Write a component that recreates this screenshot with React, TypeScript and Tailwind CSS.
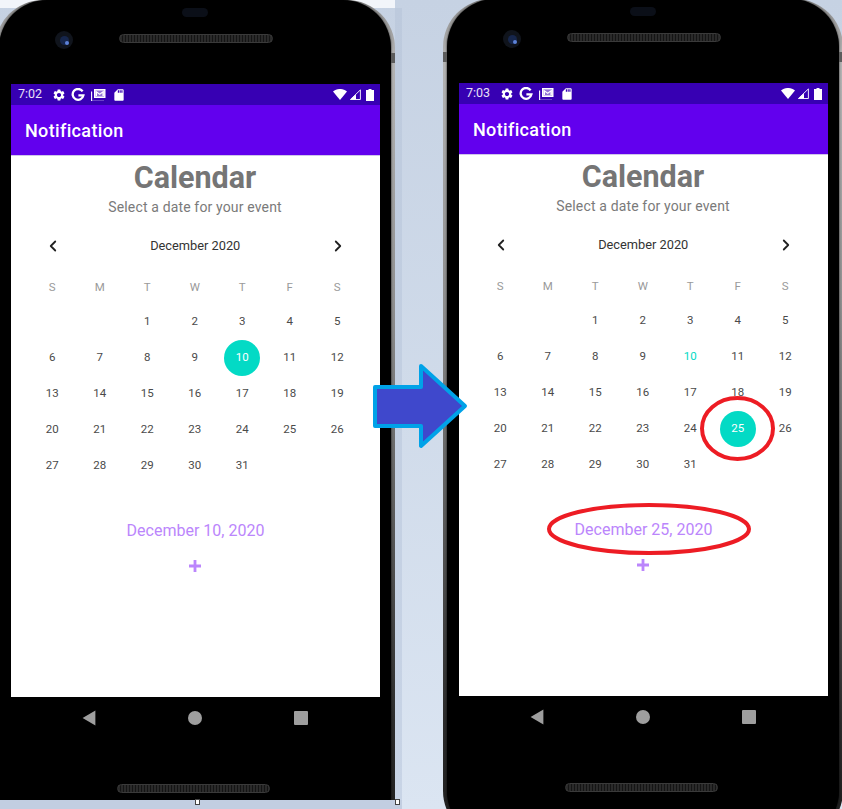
import { ChevronLeft, ChevronRight } from "lucide-react";
import { MdSettings, MdSdCard } from "react-icons/md";

const weekDays = ["S", "M", "T", "W", "T", "F", "S"];

function StatusIcons() {
  return (
    <div className="flex items-center gap-[6px] ml-[11px]">
      <MdSettings className="text-white w-[14px] h-[14px] -mx-px" />
      <svg viewBox="0 0 14 14" className="w-[14px] h-[14px]">
        <path d="M11.6 3.4A5.4 5.4 0 1 0 12.4 7.4H7.4" fill="none" stroke="#fff" strokeWidth="2.3" />
      </svg>
      <svg viewBox="0 0 15 13" className="w-[15px] h-[13px]">
        <path d="M3 1h11.5v9H3z" fill="#fff" />
        <path d="M4.4 2.4h8.7v6H4.4z" fill="#3700b3" opacity=".55" />
        <path d="M4.5 8V2.5l4.2 3 4.2-3V8h-1.5V5L8.7 7 6 5v3z" fill="#fff" />
        <path d="M.6 3.5v9.9h12.4" fill="none" stroke="#fff" strokeWidth="1.1" />
      </svg>
      <MdSdCard className="text-white w-[14px] h-[14px]" />
    </div>
  );
}

function SystemIcons() {
  return (
    <div className="flex items-center gap-[2px] mr-[6px]">
      <svg viewBox="0 0 14 11" className="w-[14px] h-[11px]">
        <path d="M0 2.6C4-.9 10-.9 14 2.6L7 11z" fill="#fff" />
      </svg>
      <svg viewBox="0 0 12 11" className="w-[12px] h-[11px]">
        <path d="M11.4.9v9.6H1.4z" fill="none" stroke="#fff" strokeWidth=".9" />
        <path d="M7 5.5v5H1.4z" fill="#fff" />
      </svg>
      <svg viewBox="0 0 8 12" className="w-[8px] h-[12px] ml-[3px]">
        <path d="M2.5 0h3v1H8v11H0V1h2.5z" fill="#fff" />
      </svg>
    </div>
  );
}

function Speaker({ width }: { width: string }) {
  return (
    <div
      className={`${width} h-[9px] rounded-full border border-[#3a3a3a] bg-[repeating-linear-gradient(90deg,#2a2a2a_0px,#2a2a2a_2px,#141414_2px,#141414_3px)]`}
    />
  );
}

function Phone({
  time,
  selected,
  date,
  className,
}: {
  time: string;
  selected: number;
  date: string;
  className: string;
}) {
  const cells: (number | null)[] = [null, null, ...Array.from({ length: 31 }, (_, i) => i + 1)];
  return (
    <div className={`relative w-[400px] shrink-0 overflow-hidden bg-[linear-gradient(180deg,#8a8a8a_0px,#b4b4b4_60px,#8f8f8f_300px,#6a6a6a_450px,#2c2c2c_720px,#1c1c1c_840px)] px-[4px] ${className}`}>
      <div className="absolute left-0 top-[53px] w-[4px] h-[10px] bg-[#5c5c5c]" />
      <div className="absolute right-0 top-[53px] w-[4px] h-[10px] bg-[#5c5c5c]" />
      <div className="h-full bg-black rounded-[inherit] shadow-[0_0_2px_#000]">
        <div className="relative h-[84px] flex flex-col items-center">
          <div className="w-[26px] h-[9px] rounded-full bg-[#0b0f18] mt-[8px]" />
          <div className="mt-[17px] ml-[1px]">
            <Speaker width="w-[154px]" />
          </div>
          <div className="absolute left-[56px] top-[31px] w-[18px] h-[18px] rounded-full bg-[#10141c] flex items-center justify-center">
            <div className="w-[9px] h-[9px] rounded-full bg-[#16264c] flex items-end justify-end">
              <div className="w-[4px] h-[4px] rounded-full bg-[#5d82d8]" />
            </div>
          </div>
        </div>

        <div className="ml-[12px] w-[369px] h-[613px] bg-white flex flex-col font-['Roboto',sans-serif]">
          <div className="h-[21px] bg-[#3700b3] flex items-center justify-between pl-[7px] text-white text-[12.5px]">
            <div className="flex items-center">
              <span className="text-[#e8e0f6]">{time}</span>
              <StatusIcons />
            </div>
            <SystemIcons />
          </div>
          <div className="h-[51px] bg-[#6200ee] border-b border-[#cfc4ea] flex items-center pl-[14px] text-white text-[18px] tracking-[0.35px] font-medium">
            Notification
          </div>

          <div className="text-center text-[30.5px] leading-[36px] font-bold text-[#757575] mt-[4px] -ml-px">Calendar</div>
          <div className="text-center text-[14px] tracking-[0.15px] leading-[20px] text-[#7a7a7a] mt-[1px] -ml-px">Select a date for your event</div>

          <div className="ml-[18px] w-[332.5px] grid grid-cols-7 mt-[13px] h-[32px] items-center text-[#212121]">
            <ChevronLeft className="justify-self-center w-[18px] h-[18px]" strokeWidth={2.4} />
            <div className="col-span-5 text-center text-[12.8px] text-[#333]">December 2020</div>
            <ChevronRight className="justify-self-center w-[18px] h-[18px]" strokeWidth={2.4} />
          </div>

          <div className="ml-[17.5px] w-[332.5px] grid grid-cols-7 mt-[10px]">
            {weekDays.map((d, i) => (
              <div key={i} className="h-[32px] flex items-center justify-center text-[11.5px] text-[#9a9a9a]">
                {d}
              </div>
            ))}
            {cells.map((n, i) => (
              <div key={i} className="h-[36px] flex items-center justify-center text-[11.5px] text-[#4a4a4a]">
                {n === selected ? (
                  <div className="w-[36px] h-[36px] rounded-full bg-[#03dac5] text-white flex items-center justify-center">{n}</div>
                ) : n === 10 ? (
                  <span className="text-[#03dac5]">{n}</span>
                ) : (
                  n
                )}
              </div>
            ))}
          </div>

          <div className="text-center text-[16px] leading-[24px] text-[#bb86fc] mt-[35px]">{date}</div>
          <svg viewBox="0 0 12 12" className="w-[12px] h-[12px] self-center mt-[17px] -ml-[2px]">
            <path d="M4.6 0h2.8v4.6H12v2.8H7.4V12H4.6V7.4H0V4.6h4.6z" fill="#bb86fc" />
          </svg>
        </div>

        <div className="ml-[11px] w-[369px] flex justify-center items-center mt-[14px] h-[14px]">
          <div className="w-[106px] flex justify-center">
            <svg viewBox="0 0 14 16" className="w-[14px] h-[16px]">
              <path d="M13.4 0.6v14.8L0.6 8z" fill="#9e9e9e" />
            </svg>
          </div>
          <div className="w-[106px] flex justify-center">
            <div className="w-[14px] h-[14px] rounded-full bg-[#9e9e9e]" />
          </div>
          <div className="w-[106px] flex justify-center">
            <div className="w-[14px] h-[14px] bg-[#9e9e9e] rounded-[1px]" />
          </div>
        </div>

        <div className="flex justify-center mt-[59px] -ml-[4px]">
          <Speaker width="w-[153px]" />
        </div>
      </div>
    </div>
  );
}

export default function App() {
  return (
    <div className="relative w-[842px] h-[809px] overflow-hidden flex items-start bg-[linear-gradient(180deg,#c6d2e3_0%,#d0dbea_50%,#dbe5f2_100%)]">
      <div className="absolute left-0 top-0 w-[395px] h-[8px] bg-[#f2f5fa]" />
      <div className="absolute left-[395px] top-[8px] w-[7px] h-[792px] bg-[linear-gradient(180deg,#bdcadd,#c8d4e6)]" />
      <div className="relative -ml-[5px] shrink-0 w-[400px]">
        <Phone time="7:02" selected={10} date="December 10, 2020" className="h-[800px] rounded-t-[48px]" />
        <div className="h-[9px] ml-[5px] w-[402px] bg-[#c2cee1]" />
      </div>
      <div className="ml-[48px] -mt-px shrink-0">
        <Phone time="7:03" selected={25} date="December 25, 2020" className="h-[840px] rounded-[48px]" />
      </div>

      <svg viewBox="0 0 842 809" className="absolute inset-0 w-[842px] h-[809px] pointer-events-none">
        <path d="M375 387H421V366L465 406L421 446V426H375Z" fill="#3f48cc" stroke="#00a2e8" strokeWidth="4" strokeLinejoin="round" />
        <ellipse cx="737.5" cy="428.5" rx="35.5" ry="30.5" fill="none" stroke="#ed1c24" strokeWidth="4" />
        <ellipse cx="649" cy="529" rx="100" ry="24" fill="none" stroke="#ed1c24" strokeWidth="4" />
      </svg>

      <div className="absolute left-[195px] top-[799px] w-[5px] h-[6px] bg-white border border-[#444]" />
      <div className="absolute left-[395px] top-[799px] w-[5px] h-[6px] bg-white border border-[#444]" />
    </div>
  );
}
